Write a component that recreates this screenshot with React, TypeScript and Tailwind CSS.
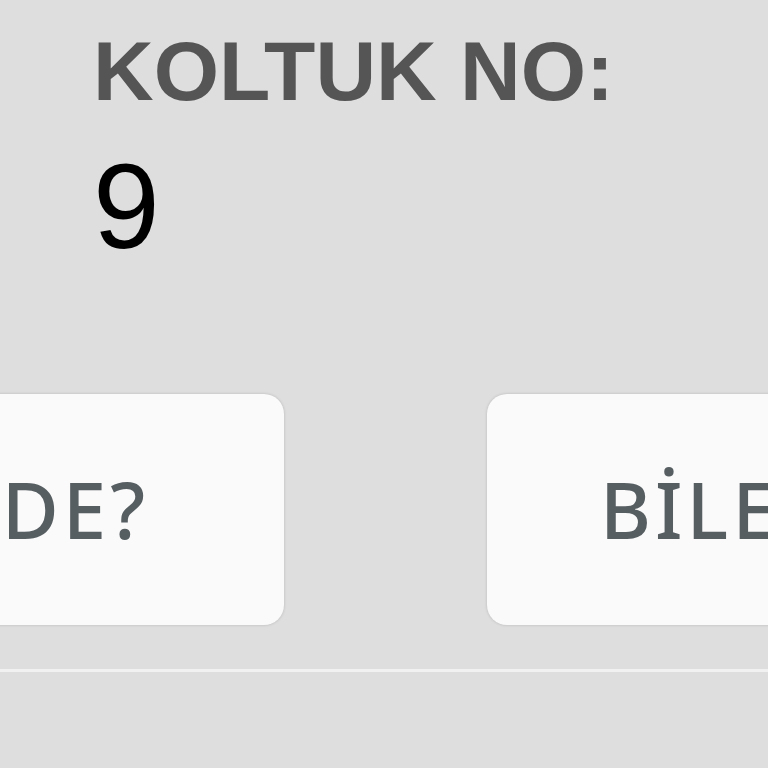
export default function App() {
  return (
    <div className="h-[768px] w-[768px] overflow-hidden bg-[#dedede] font-['Liberation_Sans',Arial,sans-serif]">
      {/* seat info */}
      <div className="pl-[93px] pt-[29px]">
        <div className="text-[84px] leading-none font-bold text-[#555555]">
          KOLTUK NO:
        </div>
        <div className="mt-[33px] text-[120px] leading-none text-black">9</div>
      </div>

      {/* actions */}
      <div className="mt-[128px] flex gap-[203px] font-['Noto_Sans','Open_Sans',sans-serif] text-[78px] font-medium tracking-[4px] text-[#575e62]">
        <button className="ml-[-304px] flex h-[231px] w-[588px] shrink-0 items-center justify-end rounded-[20px] bg-[#fafafa] pr-[135px] shadow-[0_0_3px_rgba(0,0,0,0.18)]">
          NEREDE?
        </button>
        <button className="flex h-[231px] w-[588px] shrink-0 items-center justify-start rounded-[20px] bg-[#fafafa] pl-[113px] shadow-[0_0_3px_rgba(0,0,0,0.18)]">
          BİLETİM
        </button>
      </div>

      <div className="mt-[44px] h-[3px] w-full bg-[#f1f1f1]" />
    </div>
  );
}
